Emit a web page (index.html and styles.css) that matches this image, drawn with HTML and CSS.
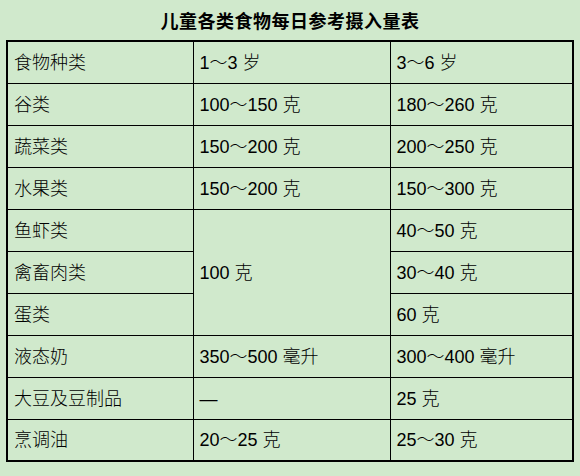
FILE: index.html
```html
<!DOCTYPE html>
<html lang="zh-CN">
<head>
<meta charset="utf-8">
<title>儿童各类食物每日参考摄入量表</title>
<link rel="stylesheet" href="styles.css">
</head>
<body>
<div class="page">
  <h1 class="title">儿童各类食物每日参考摄入量表</h1>
  <table class="intake">
    <colgroup>
      <col class="c1"><col class="c2"><col class="c3">
    </colgroup>
    <tbody>
      <tr><td>食物种类</td><td>1～3 岁</td><td>3～6 岁</td></tr>
      <tr><td>谷类</td><td>100～150 克</td><td>180～260 克</td></tr>
      <tr><td>蔬菜类</td><td>150～200 克</td><td>200～250 克</td></tr>
      <tr><td>水果类</td><td>150～200 克</td><td>150～300 克</td></tr>
      <tr><td>鱼虾类</td><td rowspan="3">100 克</td><td>40～50 克</td></tr>
      <tr><td>禽畜肉类</td><td>30～40 克</td></tr>
      <tr><td>蛋类</td><td>60 克</td></tr>
      <tr><td>液态奶</td><td>350～500 毫升</td><td>300～400 毫升</td></tr>
      <tr><td>大豆及豆制品</td><td>—</td><td>25 克</td></tr>
      <tr><td>烹调油</td><td>20～25 克</td><td>25～30 克</td></tr>
    </tbody>
  </table>
</div>
</body>
</html>
```
FILE: styles.css
```css
html, body {
  margin: 0;
  padding: 0;
  background: #d0e9cc;
  overflow: hidden;
}
body {
  font-family: "Liberation Sans", "Noto Sans CJK SC", sans-serif;
  color: #000;
}
.page {
  width: 580px;
  padding: 0 6px;
  box-sizing: border-box;
}
.title {
  margin: 0;
  height: 40px;
  line-height: 40px;
  text-align: center;
  font-size: 18px;
  font-weight: bold;
  letter-spacing: 0.5px;
  font-family: "Noto Sans CJK SC", sans-serif;
}
.intake {
  width: 566px;
  border-collapse: collapse;
  border: 2px solid #000;
  table-layout: fixed;
}
.c1 { width: 186px; }
.c2 { width: 197px; }
.c3 { width: 183px; }
.intake td {
  border: 1px solid #000;
  height: 42px;
  padding: 1px 0 0 6px;
  font-size: 18px;
  line-height: 24px;
  font-weight: 300;
  vertical-align: middle;
  box-sizing: border-box;
}
```
